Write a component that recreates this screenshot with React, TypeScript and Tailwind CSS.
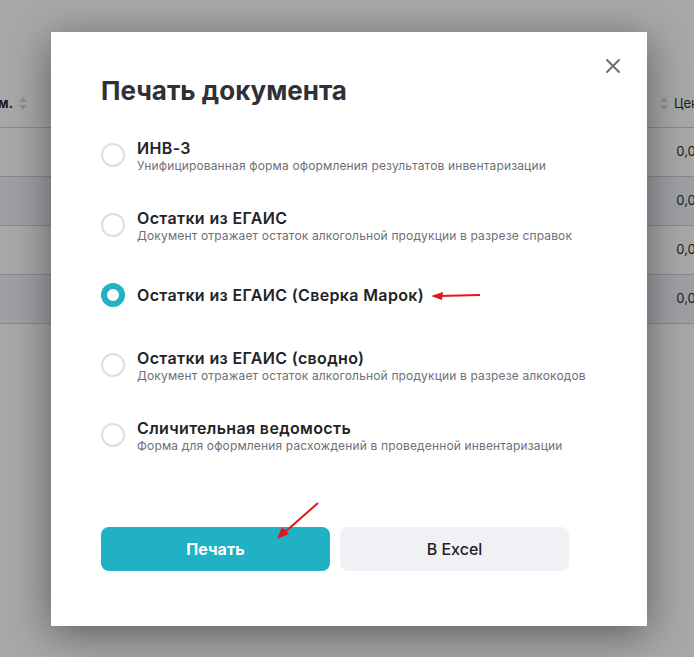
import React from "react";

const SortIcon = () => (
  <svg width="8" height="13" viewBox="0 0 8 13" className="shrink-0">
    <path d="M4 0 L8 5 H0 Z" fill="#8f8f8f" />
    <path d="M4 13 L8 8 H0 Z" fill="#8f8f8f" />
  </svg>
);

const items = [
  { title: "ИНВ-3", desc: "Унифицированная форма оформления результатов инвентаризации" },
  { title: "Остатки из ЕГАИС", desc: "Документ отражает остаток алкогольной продукции в разрезе справок" },
  { title: "Остатки из ЕГАИС (Сверка Марок)", desc: "", selected: true },
  { title: "Остатки из ЕГАИС (сводно)", desc: "Документ отражает остаток алкогольной продукции в разрезе алкокодов" },
  { title: "Сличительная ведомость", desc: "Форма для оформления расхождений в проведенной инвентаризации" },
];

export default function App() {
  const rows = [false, true, false, true];
  return (
    <div
      className="relative h-[657px] w-[694px] overflow-hidden bg-[#a8a8a8]"
      style={{ fontFamily: "Inter, Roboto, 'Noto Sans', sans-serif" }}
    >
      {/* background table */}
      <div className="pt-[80px]">
        <div className="flex h-[48px] items-center justify-between border-b border-[#8a8a8a] text-[13px] font-bold text-[#1c1c1c]">
          <div className="flex items-center gap-[6px] ml-[-10px]">
            <span>им.</span>
            <SortIcon />
          </div>
          <div className="flex items-center gap-[6px] mr-[-12px]">
            <SortIcon />
            <span className="font-normal">Цена</span>
          </div>
        </div>
        {rows.map((dark, i) => (
          <div
            key={i}
            className={`flex h-[49px] items-center justify-end border-b border-[#8a8a8a] text-[13px] text-[#1c1c1c] ${dark ? "bg-[#9ea0a6]" : "bg-[#a8a8a8]"}`}
          >
            <span className="mr-[-10px]">0,00</span>
          </div>
        ))}
      </div>

      {/* modal */}
      <div className="absolute left-[51px] top-[32px] h-[594px] w-[596px] bg-white shadow-[0_8px_40px_rgba(0,0,0,0.45)]">
        <button className="absolute right-[26px] top-[26px] flex h-[16px] w-[16px] items-center justify-center">
          <svg width="16" height="16" viewBox="0 0 16 16">
            <path d="M2 2 L14 14 M14 2 L2 14" stroke="#6f6f6f" strokeWidth="2" strokeLinecap="round" />
          </svg>
        </button>
        <div className="px-[50px] pt-[41px]">
          <h1 className="text-[26px] font-bold leading-[36px] text-[#2e3136]">Печать документа</h1>
          <div className="mt-[11px] flex flex-col">
            {items.map((it, i) => (
              <div key={i} className="flex h-[70px] items-center gap-[12px]">
                {it.selected ? (
                  <span className="h-[24px] w-[24px] shrink-0 rounded-full border-[6px] border-[#22b1c5] bg-white" />
                ) : (
                  <span className="h-[24px] w-[24px] shrink-0 rounded-full border-2 border-[#dedede] bg-white" />
                )}
                <div className="flex flex-col">
                  <span className="text-[16px] font-semibold leading-[20px] tracking-[0.35px] text-[#222326]">{it.title}</span>
                  {it.desc && (
                    <span className="text-[12px] leading-[15px] tracking-[0.15px] text-[#6d7078]">{it.desc}</span>
                  )}
                </div>
              </div>
            ))}
          </div>
          <div className="mt-[57px] flex gap-[10px]">
            <button className="h-[44px] w-[229px] rounded-[8px] bg-[#21b1c5] text-[16px] font-bold text-white">Печать</button>
            <button className="h-[44px] w-[229px] rounded-[8px] bg-[#f0f1f5] text-[16px] font-medium text-[#222326]">В Excel</button>
          </div>
        </div>
      </div>

      {/* red arrows */}
      <svg className="pointer-events-none absolute left-0 top-0" width="694" height="657">
        <line x1="480" y1="295" x2="440" y2="296" stroke="#e0171b" strokeWidth="2" />
        <path d="M431 296 L443 292 L442 300 Z" fill="#e0171b" />
        <line x1="318" y1="503" x2="285" y2="532" stroke="#e0171b" strokeWidth="2" />
        <path d="M277 539 L282 527 L289 534 Z" fill="#e0171b" />
      </svg>
    </div>
  );
}
